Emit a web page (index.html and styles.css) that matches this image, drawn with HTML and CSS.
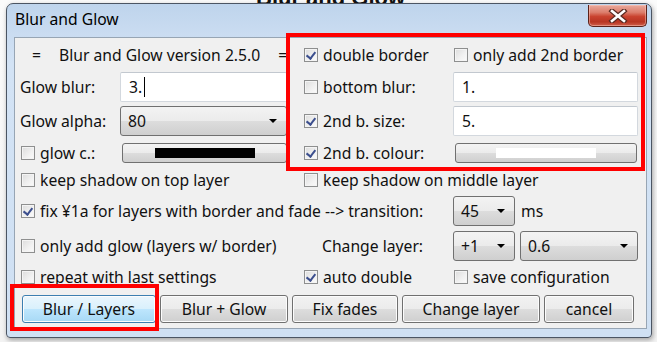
FILE: index.html
```html
<!DOCTYPE html>
<html>
<head>
<meta charset="utf-8">
<link rel="stylesheet" href="styles.css">
</head>
<body>
<div class="bg-title">Blur and Glow</div>
<div class="window">
  <div class="titlebar">
    <span class="title">Blur and Glow</span>
    <div class="close">
      <svg width="20" height="14" viewBox="0 0 20 14">
        <path d="M4 2 L16 12 M16 2 L4 12" stroke="#5a2a22" stroke-width="5" stroke-linecap="square" fill="none"/>
        <path d="M4 2 L16 12 M16 2 L4 12" stroke="#ffffff" stroke-width="2.6" stroke-linecap="square" fill="none"/>
      </svg>
    </div>
  </div>
  <div class="client">
    <div class="grid">
      <div class="version span-ab"><span>=</span><span>Blur and Glow version 2.5.0</span><span>=</span></div>
      <label class="cb colc"><span class="box checked"></span>double border</label>
      <label class="cb cold"><span class="box"></span>only add 2nd border</label>

      <div class="lbl cola">Glow blur:</div>
      <div class="input colb">3.<span class="caret"></span></div>
      <label class="cb colc"><span class="box"></span>bottom blur:</label>
      <div class="input cold">1.</div>

      <div class="lbl cola">Glow alpha:</div>
      <div class="select colb"><span>80</span><span class="arrow"></span></div>
      <label class="cb colc"><span class="box checked"></span>2nd b. size:</label>
      <div class="input cold">5.</div>

      <label class="cb cola"><span class="box"></span>glow c.:</label>
      <div class="colorbtn colb"><span class="swatch black"></span></div>
      <label class="cb colc"><span class="box checked"></span>2nd b. colour:</label>
      <div class="colorbtn cold"><span class="swatch white"></span></div>

      <label class="cb span-ab"><span class="box"></span>keep shadow on top layer</label>
      <label class="cb span-cd"><span class="box"></span>keep shadow on middle layer</label>

      <label class="cb span-ac"><span class="box checked"></span>fix ¥1a for layers with border and fade --&gt; transition:</label>
      <div class="pair cold"><div class="select small"><span>45</span><span class="arrow"></span></div><span class="ms">ms</span></div>

      <label class="cb span-ab"><span class="box"></span>only add glow (layers w/ border)</label>
      <div class="lbl colc indent">Change layer:</div>
      <div class="pair cold"><div class="select small"><span>+1</span><span class="arrow"></span></div><div class="select wide"><span>0.6</span><span class="arrow"></span></div></div>

      <label class="cb span-ab"><span class="box"></span>repeat with last settings</label>
      <label class="cb colc"><span class="box checked"></span>auto double</label>
      <label class="cb cold"><span class="box"></span>save configuration</label>
    </div>
    <div class="buttons">
      <div class="btn default b1">Blur / Layers</div>
      <div class="btn b2">Blur + Glow</div>
      <div class="btn b3">Fix fades</div>
      <div class="btn b4">Change layer</div>
      <div class="btn b5">cancel</div>
    </div>
  </div>
</div>
<div class="mark mark-top"></div>
<div class="mark mark-btn"></div>
</body>
</html>
```
FILE: styles.css
```css
html, body {
  margin: 0;
  padding: 0;
}
body {
  width: 657px;
  height: 342px;
  overflow: hidden;
  position: relative;
  background: linear-gradient(to bottom, #fbfbfb 0, #f3f3f3 100%);
  font-family: "Noto Sans", "Open Sans", sans-serif;
  font-size: 15.7px;
  color: #111;
}
.bg-title {
  position: absolute;
  left: 256px;
  top: -15px;
  font-family: "Liberation Sans", sans-serif;
  font-weight: bold;
  font-size: 22px;
  color: #111;
}
.window {
  position: relative;
  z-index: 1;
  margin: 3px 0 0 6px;
  width: 646px;
  height: 335px;
  box-sizing: border-box;
  border: 1px solid #4b5563;
  border-radius: 7px 7px 4px 4px;
  background: linear-gradient(to bottom, #bed4ec 0, #cadcf1 30px, #d3e3f5 60px, #cfe0f3 100%);
  padding: 0 4px 8px 7px;
  display: flex;
  flex-direction: column;
  box-shadow: 1px 2px 5px rgba(0,0,0,0.35);
}
.titlebar {
  height: 33px;
  display: flex;
  justify-content: space-between;
  align-items: flex-start;
}
.title {
  padding: 4px 0 0 1px;
  line-height: 22px;
  color: #000;
}
.close {
  margin-top: 1px;
  width: 59px;
  height: 22px;
  box-sizing: border-box;
  border: 1px solid #5b2119;
  border-top: none;
  border-radius: 0 0 5px 5px;
  background: linear-gradient(to bottom, #e9a99c 0, #dc7e6c 35%, #c9432f 55%, #b83523 80%, #d0604c 100%);
  box-shadow: inset 0 0 0 1px rgba(255,210,200,0.45);
  display: flex;
  align-items: center;
  justify-content: center;
}
.close svg { display: block; }
.client {
  height: 292px;
  box-sizing: border-box;
  border: 1px solid #97a5b4;
  background: #f0f0f0;
}
.grid {
  display: grid;
  padding-left: 5px;
  grid-template-columns: 100px 167px 16px 150px 185px;
  grid-template-rows: 33px 32px 36px 28px 26px 36px 34px 28px;
  align-items: center;
}
.cola { grid-column: 1; }
.colb { grid-column: 2; }
.colc { grid-column: 4; }
.cold { grid-column: 5; }
.span-ab { grid-column: 1 / 3; }
.span-ac { grid-column: 1 / 5; }
.span-cd { grid-column: 4 / 6; }
.version {
  display: flex;
  gap: 18px;
  padding-left: 12px;
  white-space: nowrap;
}
.lbl { white-space: nowrap; }
.indent { padding-left: 19px; }
.cb {
  display: flex;
  align-items: center;
  gap: 5px;
  white-space: nowrap;
}
.box {
  width: 14px;
  height: 14px;
  box-sizing: border-box;
  margin-left: 1px;
  border: 1px solid #8e8f8f;
  background: linear-gradient(135deg, #dcdcdc 0, #f1f1f1 60%, #fbfbfb 100%);
  box-shadow: inset 0 0 0 1px #f4f4f4;
  flex: none;
  position: relative;
}
.box.checked::after {
  content: "";
  position: absolute;
  left: 3px;
  top: 1px;
  width: 4px;
  height: 7px;
  border: solid #3c4f8e;
  border-width: 0 2px 2px 0;
  transform: rotate(38deg);
}
.input {
  height: 30px;
  box-sizing: border-box;
  border: 1px solid #d3d8de;
  border-top-color: #c2c8cf;
  border-radius: 2px;
  background: #fff;
  padding-left: 8px;
  display: flex;
  align-items: center;
}
.caret {
  display: inline-block;
  width: 1px;
  height: 20px;
  background: #000;
  margin-left: 2px;
}
.select {
  height: 30px;
  box-sizing: border-box;
  border: 1px solid #707070;
  border-radius: 3px;
  background: linear-gradient(to bottom, #f3f3f3 0, #ebebeb 50%, #dddddd 50%, #cfcfcf 100%);
  padding: 0 9px 0 7px;
  display: flex;
  align-items: center;
  justify-content: space-between;
}
.arrow {
  width: 0;
  height: 0;
  border-left: 4px solid transparent;
  border-right: 4px solid transparent;
  border-top: 4px solid #000;
}
.pair {
  display: flex;
  align-items: center;
  gap: 5px;
}
.select.small { width: 62px; }
.select.wide { width: 118px; }
.ms { padding-left: 1px; }
.colorbtn {
  height: 20px;
  box-sizing: border-box;
  margin-left: 2px;
  border: 1px solid #707070;
  border-radius: 3px;
  background: linear-gradient(to bottom, #f3f3f3 0, #ebebeb 50%, #dddddd 50%, #cfcfcf 100%);
  display: flex;
  align-items: center;
  justify-content: center;
}
.colorbtn.cold { margin-right: 1px; }
.swatch {
  width: 100px;
  height: 10px;
}
.swatch.black { background: #000; }
.swatch.white { background: #fff; }
.buttons {
  display: flex;
  gap: 4px;
  padding: 4px 0 0 7px;
}
.btn {
  height: 28px;
  box-sizing: border-box;
  border: 1px solid #707070;
  border-radius: 3px;
  background: linear-gradient(to bottom, #f2f2f2 0, #ebebeb 50%, #dddddd 50%, #cfcfcf 100%);
  box-shadow: inset 0 0 0 1px #fcfcfc;
  display: flex;
  align-items: center;
  justify-content: center;
  white-space: nowrap;
}
.btn.default {
  border-color: #3c7fb1;
  background: linear-gradient(to bottom, #eaf6fd 0, #d9f0fc 50%, #bee6fd 50%, #a7d9f5 100%);
}
.b1 { width: 134px; }
.b2 { width: 128px; }
.b3 { width: 106px; }
.b4 { width: 138px; }
.b5 { width: 90px; }
.mark {
  position: absolute;
  z-index: 2;
  box-sizing: border-box;
  border: 4px solid #ff0000;
}
.mark-top {
  left: 286px;
  top: 33px;
  width: 359px;
  height: 138px;
}
.mark-btn {
  left: 10px;
  top: 284px;
  width: 149px;
  height: 47px;
}
```
